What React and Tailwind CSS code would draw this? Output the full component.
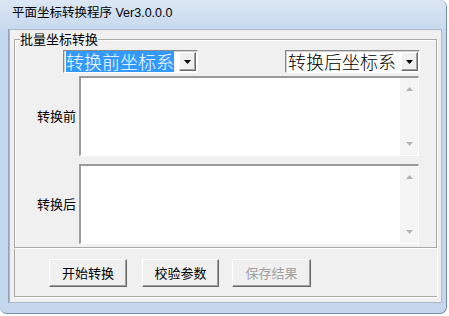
const cjk = "font-['Noto_Sans_CJK_SC','Liberation_Sans',sans-serif]";
const latin = "font-['Liberation_Sans','Noto_Sans_CJK_SC',sans-serif]";

function Arrow({ up = false, color = "#000" }) {
  return (
    <svg width="7" height="4" viewBox="0 0 7 4">
      <path d={up ? "M0 4 L3.5 0 L7 4 Z" : "M0 0 L7 0 L3.5 4 Z"} fill={color} />
    </svg>
  );
}

function Combo({ text, focused }) {
  return (
    <div className="w-[135px] h-[23px] flex items-center bg-white border-t border-l border-[#8a8a8a] border-b border-r border-b-white border-r-white shadow-[inset_1px_1px_0_#d0d0d0]">
      <div className="flex-1 pl-[2px] flex items-center h-full">
        <span
          className={`${cjk} font-light text-[18px] leading-[21px] ${
            focused ? "bg-[#3399ff] text-white" : "text-black"
          }`}
        >
          {text}
        </span>
      </div>
      <div className="w-[17px] h-[19px] mr-[1px] flex items-center justify-center bg-[#f0f0f0] border-t border-l border-white border-b border-r border-b-[#696969] border-r-[#696969] shadow-[inset_-1px_-1px_0_#a0a0a0]">
        <Arrow />
      </div>
    </div>
  );
}

function TextBox({ label }) {
  return (
    <div className="flex items-center">
      <div className={`${cjk} w-[64px] text-right pr-[3px] text-[13px] text-black`}>{label}</div>
      <div className="w-[340px] h-[80px] flex bg-white border-t-2 border-l-2 border-[#9a9a9a] border-b border-r border-b-white border-r-white">
        <div className="flex-1" />
        <div className="w-[18px] flex flex-col items-center justify-between py-[9px] bg-[#f5f5f5]">
          <Arrow up color="#b4b4b4" />
          <Arrow color="#b4b4b4" />
        </div>
      </div>
    </div>
  );
}

function Btn({ children, disabled, className = "" }) {
  return (
    <button
      className={`${cjk} h-[28px] text-[13px] bg-[#f0f0f0] border-t border-l border-white border-b border-r border-b-[#696969] border-r-[#696969] shadow-[inset_-1px_-1px_0_#a0a0a0] ${
        disabled ? "text-[#a0a0a0]" : "text-black"
      } ${className}`}
    >
      {children}
    </button>
  );
}

export default function App() {
  return (
    <div className="w-[449px] h-[316px] bg-white overflow-hidden">
      <div className="w-[447px] h-[314px] flex flex-col rounded-tr-[7px] rounded-b-[7px] bg-[#c4d7ec] border-r border-b border-[#7590b2] overflow-hidden">
        {/* TITLE BAR */}
        <div className={`${latin} h-[29px] shrink-0 flex items-center pl-[12px] pb-[2px] text-[12.5px] text-black bg-linear-to-b from-[#dbe7f4] to-[#c7daee]`}>
          平面坐标转换程序 Ver3.0.0.0
        </div>

        {/* CLIENT */}
        <div className="flex-1 flex ml-[8px] mr-[4px] mb-[10px] border-l border-[#8fa3bb]">
          <div className="flex-1 flex flex-col px-[4px] bg-[#f0f0f0] border border-[#a9b9cb]">
            <fieldset className="w-[423px] border border-[#a9a9a9] shadow-[inset_1px_1px_0_#fff,1px_1px_0_#fff]">
              <legend className={`${cjk} ml-[5px] text-[13px] leading-[18px] text-black`}>批量坐标转换</legend>

              {/* COMBOS */}
              <div className="flex mt-[2px]">
                <div className="ml-[48px]">
                  <Combo text="转换前坐标系" focused />
                </div>
                <div className="ml-auto mr-[16px]">
                  <Combo text="转换后坐标系" />
                </div>
              </div>

              <div className="mt-[3px]">
                <TextBox label="转换前" />
              </div>
              <div className="mt-[8px] mb-[3px]">
                <TextBox label="转换后" />
              </div>
            </fieldset>

            {/* BUTTONS */}
            <div className="w-[423px] mt-[1px] flex pt-[10px] pb-[9px] pl-[34px] border-l border-b border-[#a9a9a9] shadow-[1px_1px_0_#fff]">
              <Btn className="w-[78px]">开始转换</Btn>
              <Btn className="w-[77px] ml-[15px]">校验参数</Btn>
              <Btn className="w-[79px] ml-[13px]" disabled>保存结果</Btn>
            </div>
          </div>
        </div>
      </div>
    </div>
  );
}
